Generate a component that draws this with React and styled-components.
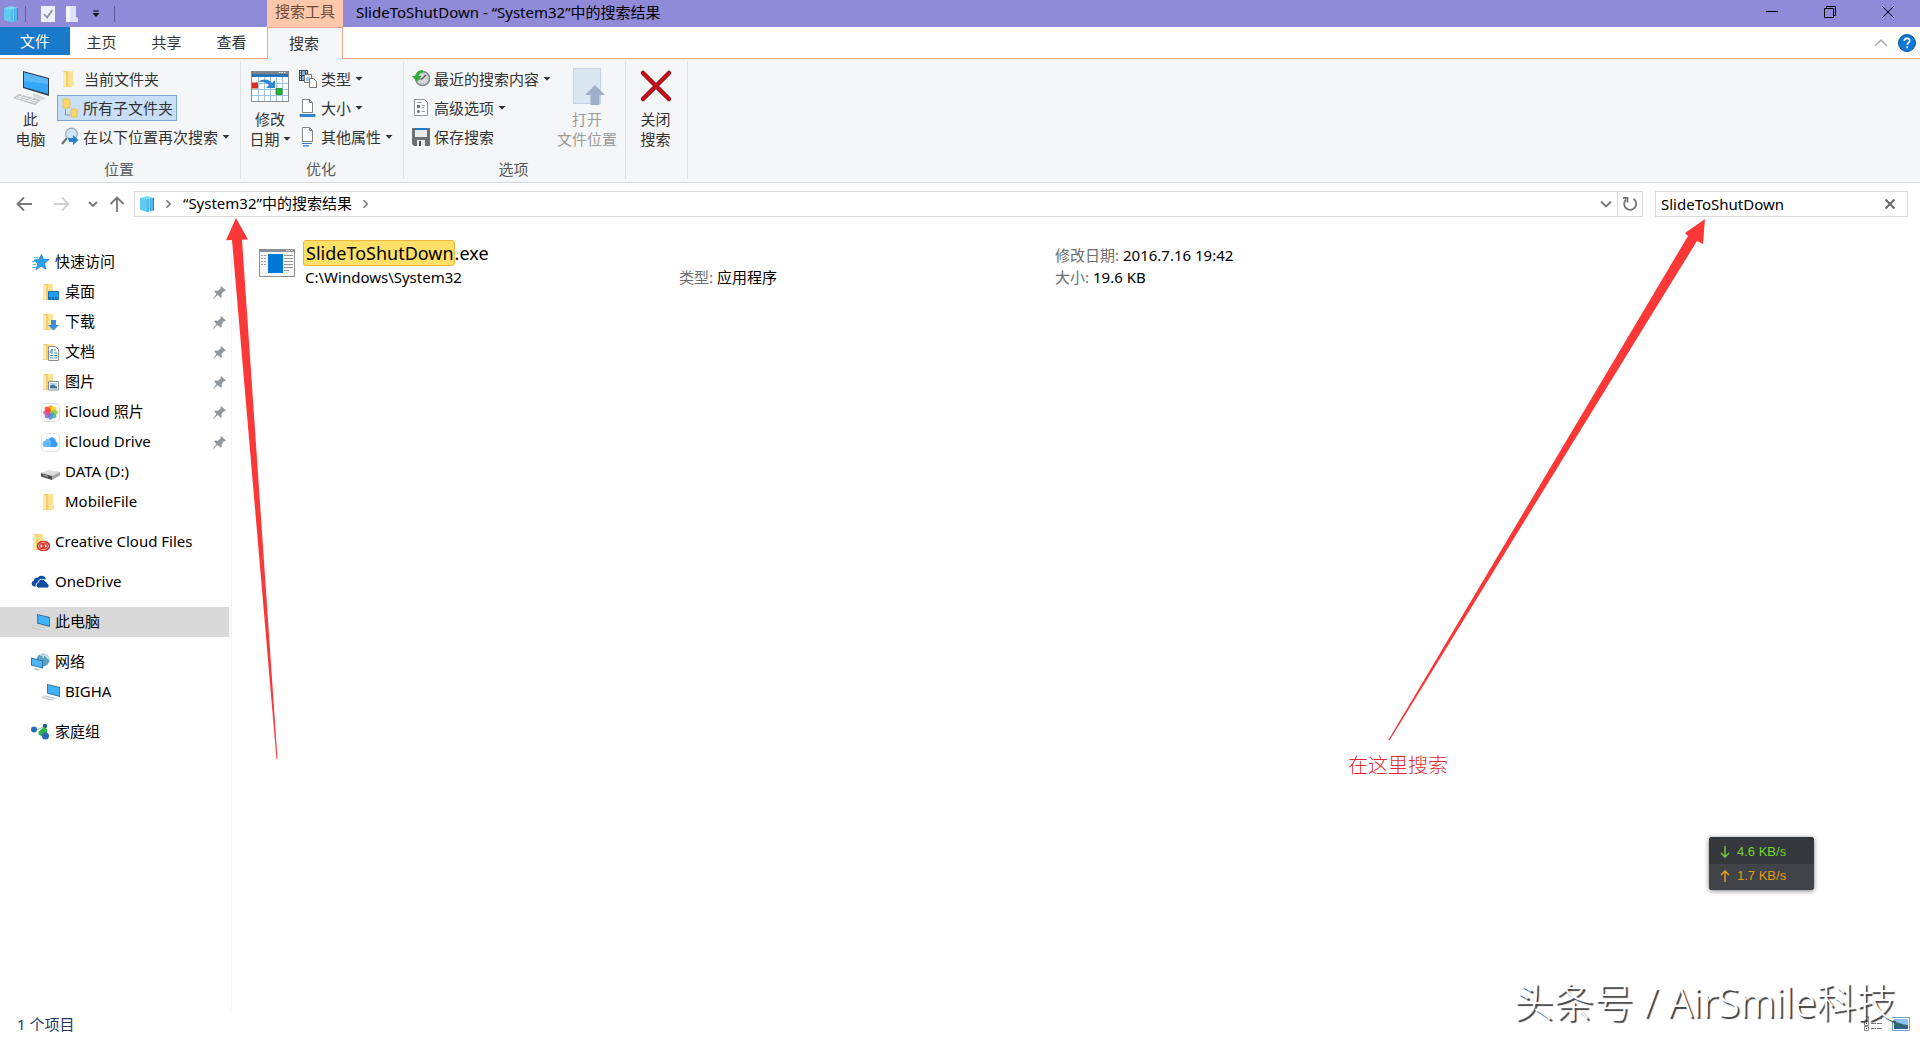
import React, { useState } from "react";
import styled, { createGlobalStyle, css } from "styled-components";

const GlobalStyle = createGlobalStyle`
  * {
    box-sizing: border-box;
  }

  body {
    margin: 0;
    background: #fff;
    font-family: "Noto Sans", "Noto Sans CJK SC", sans-serif;
    font-size: 15px;
    line-height: 20px;
    color: #000;
  }

  button,
  input {
    font: inherit;
    color: inherit;
    margin: 0;
    padding: 0;
    border: 0;
    background: none;
  }

  svg {
    display: block;
    flex: none;
  }
`;

const Window = styled.div`
  position: relative;
  min-height: 100vh;
  display: flex;
  flex-direction: column;
  overflow: hidden;
`;

/* ---------- title bar ---------- */

const TitleBar = styled.header`
  display: flex;
  align-items: stretch;
  height: 27px;
  padding-right: 3px;
  background: #8f8bd8;
`;

const QuickTools = styled.div`
  display: flex;
  align-items: center;
  width: 267px;
  padding-left: 3px;
`;

const ToolSeparator = styled.span`
  width: 1px;
  height: 16px;
  margin: 0 10px 0 6px;
  background: #5f5b96;
`;

const ToolButton = styled.button`
  display: flex;
  align-items: center;
  justify-content: center;
  width: 24px;
  height: 20px;
`;

const ContextTitle = styled.div`
  width: 76px;
  background: #ffc8ab;
  color: #6b4a3c;
  text-align: center;
  line-height: 22px;
`;

const WindowTitle = styled.h1`
  flex: 1;
  margin: 0;
  padding-left: 13px;
  font-size: 15px;
  font-weight: 400;
  line-height: 24px;
`;

const CaptionButton = styled.button`
  display: flex;
  align-items: center;
  justify-content: center;
  width: 58px;
  height: 24px;
`;

/* ---------- tabs ---------- */

const TabRow = styled.nav`
  display: flex;
  height: 32px;
  border-bottom: 1px solid #f0a48a;
`;

const Tab = styled.button`
  width: 65px;
  height: 31px;
  padding: 0 2px 1px 0;
  color: #333;

  ${(props) =>
    props.$kind === "file" &&
    css`
      width: 70px;
      height: 28px;
      padding: 0;
      background: #1979ca;
      color: #fff;
    `}

  ${(props) =>
    props.$kind === "active" &&
    css`
      width: 76px;
      height: 32px;
      margin-left: 2px;
      border: 1px solid #f0a48a;
      border-bottom: 0;
      background: #f5f6f7;
    `}
`;

const TabTools = styled.div`
  display: flex;
  align-items: center;
  gap: 11px;
  margin-left: auto;
  padding-right: 4px;
`;

/* ---------- ribbon ---------- */

const Ribbon = styled.div`
  display: flex;
  height: 124px;
  padding: 2px 0 3px;
  border-bottom: 1px solid #d6d7d8;
  background: #f5f6f7;
`;

const Group = styled.section`
  display: flex;
  flex-direction: column;
  justify-content: space-between;
  padding: 5px 6px 0 4px;
  border-right: 1px solid #dfe1e3;
`;

const GroupBody = styled.div`
  display: flex;
  height: 84px;
`;

const GroupLabel = styled.div`
  height: 20px;
  text-align: center;
  color: #5a5a5a;
`;

const SmallList = styled.div`
  display: flex;
  flex-direction: column;
  align-items: flex-start;
  gap: 3px;
`;

const SmallButton = styled.button`
  display: flex;
  align-items: center;
  gap: 4px;
  height: 26px;
  padding: 0 3px;
  border: 1px solid ${(props) => (props.$selected ? "#7da7d3" : "transparent")};
  background: ${(props) => (props.$selected ? "#c9dff5" : "transparent")};
  color: #333;
  white-space: nowrap;
`;

const LargeButton = styled.button`
  display: flex;
  flex-direction: column;
  align-items: center;
  width: ${(props) => props.$width}px;
  color: ${(props) => (props.disabled ? "#9a9a9a" : "#333")};
  white-space: nowrap;

  > svg {
    margin: 1px 0 2px;
  }
`;

const LargeLine = styled.span`
  display: flex;
  align-items: center;
  gap: 3px;
`;

/* ---------- address row ---------- */

const AddressRow = styled.div`
  display: flex;
  align-items: center;
  height: 41px;
  padding: 1px 12px 0 9px;
`;

const NavButton = styled.button`
  display: flex;
  align-items: center;
  justify-content: center;
  width: ${(props) => props.$width}px;
  height: 26px;
`;

const AddressBox = styled.div`
  flex: 1;
  display: flex;
  align-items: center;
  height: 26px;
  margin-right: 12px;
  padding-left: 4px;
  border: 1px solid #d9d9d9;
`;

const Crumbs = styled.div`
  flex: 1;
  display: flex;
  align-items: center;
  gap: 9px;

  > span {
    padding-bottom: 2px;
  }
`;

const Refresh = styled.button`
  display: flex;
  align-items: center;
  justify-content: center;
  width: 25px;
  height: 24px;
  border-left: 1px solid #d9d9d9;
`;

const SearchBox = styled.form`
  display: flex;
  align-items: center;
  width: 253px;
  height: 26px;
  border: 1px solid #d9d9d9;
`;

const SearchInput = styled.input`
  flex: 1;
  min-width: 0;
  padding-left: 5px;
  outline: 0;
`;

/* ---------- body ---------- */

const Body = styled.div`
  flex: 1;
  display: flex;
`;

const Sidebar = styled.nav`
  width: 232px;
  padding-top: 23px;
  border-right: 1px solid #f3f3f3;
`;

const NavGroup = styled.div`
  margin-bottom: 10px;
`;

const NavItem = styled.a`
  display: flex;
  align-items: center;
  gap: 5px;
  width: 229px;
  height: 30px;
  padding: 0 3px 0 ${(props) => (props.$child ? 41 : 31)}px;
  background: ${(props) => (props.$selected ? "#d9d9d9" : "transparent")};
  color: inherit;
  text-decoration: none;

  > span {
    flex: 1;
    padding-bottom: 2px;
  }
`;

const FileArea = styled.main`
  flex: 1;
  padding: 16px 0 0 27px;
`;

const FileItem = styled.article`
  display: grid;
  grid-template-columns: 420px 376px 1fr;
`;

const FileMain = styled.div`
  display: flex;
  gap: 8px;

  > svg {
    margin-top: 9px;
  }
`;

const FileName = styled.h2`
  margin: 0;
  height: 26px;
  font-size: 18px;
  font-weight: 400;
  line-height: 24px;
`;

const Match = styled.mark`
  display: inline-block;
  height: 26px;
  padding: 0 0 0 2px;
  border: 1px solid #efb63e;
  border-radius: 3px;
  background: #ffe066;
`;

const FilePath = styled.div`
  padding-left: 2px;
  line-height: 22px;
`;

const FileDetails = styled.dl`
  display: flex;
  flex-direction: column;
  justify-content: flex-end;
  margin: 0;

  > div {
    display: flex;
    gap: 4px;
    line-height: 22px;
  }

  dt {
    color: #6d6d6d;
  }

  dd {
    margin: 0;
  }
`;

const StatusBar = styled.footer`
  display: flex;
  align-items: center;
  justify-content: space-between;
  height: 30px;
  padding: 0 10px 2px 17px;
  color: #1e395b;
`;

const ViewButtons = styled.div`
  display: flex;
  gap: 10px;
`;

/* ---------- things lying over the window ---------- */

const PathArrow = styled.svg`
  position: absolute;
  left: 220px;
  top: 216px;
`;

const SearchArrow = styled.svg`
  position: absolute;
  right: 210px;
  top: 216px;
`;

const Note = styled.div`
  position: absolute;
  right: 472px;
  top: 754px;
  color: #e02a2e;
  font-size: 20px;
  font-weight: 300;
  line-height: 24px;
`;

const SpeedMeter = styled.div`
  position: absolute;
  right: 106px;
  bottom: 150px;
  width: 105px;
  border-radius: 3px;
  overflow: hidden;
  box-shadow: 0 1px 5px rgba(0, 0, 0, 0.5);
  background: #404347;
  font-family: "Liberation Sans", Arial, sans-serif;
  font-size: 13px;
`;

const SpeedLine = styled.div`
  display: flex;
  align-items: center;
  gap: 7px;
  height: ${(props) => (props.$up ? 26 : 27)}px;
  padding: ${(props) => (props.$up ? "0 0 2px" : "2px 0 0")};
  padding-left: 11px;
  background: ${(props) => (props.$up ? "#404347" : "#34373c")};
  color: ${(props) => (props.$up ? "#e39a1c" : "#74d52c")};
`;

const Watermark = styled.div`
  position: absolute;
  right: 24px;
  bottom: 13px;
  color: #fff;
  font-size: 40px;
  font-weight: 300;
  line-height: 50px;
  text-shadow: 2px 2px 1px #3c3c3c;
  white-space: nowrap;
  pointer-events: none;
`;

/* ---------- icons ---------- */

const Caret = () => (
  <svg width="8" height="6" viewBox="0 0 8 6">
    <path d="M.5 1h7L4 4.800z" fill="#333" />
  </svg>
);

const Cube = () => (
  <svg width="16" height="18" viewBox="0 0 16 18">
    <path d="M1 3l7-2 7 2v12.500L8 17l-7-2.500z" fill="#7fdcfb" />
    <path d="M1 3l7 1.500V17l-7-2.500z" fill="#5fcaf2" />
    <path d="M8 4h2v12.600L8 17z" fill="#4fb9ee" />
    <path d="M11 3.500h1.500v12.500l-1.500.3z" fill="#3aa3e4" />
    <path d="M13.500 3H15v12.500l-1.500.3z" fill="#2a8bd4" />
  </svg>
);

const ComputerLarge = () => (
  <svg width="38" height="40" viewBox="0 0 38 40">
    <path d="M11 4l26 7v18l-26-8z" fill="#2f3e4a" />
    <path d="M12 5.500l24 6.500v15L12 20z" fill="#35a6f8" />
    <path d="M12 5.500l24 6.500v5L12 14z" fill="#5ab9fb" />
    <path d="M21 26l6 2 7 3-3 2-10-3z" fill="#d5dade" />
    <path d="M7 27l22 6-6 5L1 31z" fill="#b9bec2" />
    <path d="M6 29l20 5.500M4 30.500l20 5.500M11 28l-5 4M16 29.500l-5 4M21 31l-5 4" stroke="#f3f4f5" fill="none" />
  </svg>
);

const Computer = () => (
  <svg width="19" height="18" viewBox="0 0 19 18">
    <path d="M6 1l13 3v10L6 10.500z" fill="#3d6d92" />
    <path d="M6.800 2l11.400 2.700v8L6.800 9.800z" fill="#3fb2fa" />
    <path d="M4 12.500l11 2.500-4 2.500L0 15z" fill="#c6cacd" />
    <path d="M3 13.800l10 2.500" stroke="#eee" />
  </svg>
);

const Folder = ({ children }) => (
  <svg width="19" height="18" viewBox="0 0 19 18">
    <path d="M2 1h9v16H2z" fill="#f3cf6e" />
    <path d="M7 1h5v10l1 1v4.500H7z" fill="#ffe291" />
    <path d="M2 1l3 2v14l-3-1z" fill="#ffe9ae" />
    {children}
  </svg>
);

const DesktopFolder = () => (
  <Folder>
    <path d="M7.500 8.500h10v8h-10z" fill="#1ea0f2" stroke="#1b6daa" />
    <path d="M8 15h9" stroke="#0d4f85" strokeDasharray="2 1" />
  </Folder>
);

const DownloadFolder = () => (
  <Folder>
    <path d="M10 7h5v5h3l-5.500 5.500L7 12h3z" fill="#3b8ede" />
  </Folder>
);

const DocFolder = () => (
  <Folder>
    <path d="M7.500 3.500h7l3 3v11h-10z" fill="#fff" stroke="#8a8f94" />
    <path d="M9 10l2-4v5M13 7h2M9 12.500h3M13 10h3M9 15h3M13 12.500h3M13 15h3" stroke="#3f8bc4" fill="none" />
  </Folder>
);

const PictureFolder = () => (
  <Folder>
    <path d="M7.500 8.500h10v8.500h-10z" fill="#fff" stroke="#8a8f94" />
    <path d="M9 10h7v2H9z" fill="#a9d3f5" />
    <path d="M9 12.500l3-1 4 2v2H9z" fill="#44739b" />
  </Folder>
);

const CloudFolder = () => (
  <Folder>
    <ellipse cx="12.500" cy="13" rx="6" ry="4.500" fill="#fff" stroke="#d8251c" strokeWidth="1.500" />
    <circle cx="11" cy="13" r="2.300" fill="none" stroke="#d8251c" strokeWidth="1.200" />
    <circle cx="14" cy="13" r="2.300" fill="none" stroke="#d8251c" strokeWidth="1.200" />
  </Folder>
);

const QuickStar = () => (
  <svg width="19" height="18" viewBox="0 0 19 18">
    <path d="M10.500 1.500l1.800 4.700 5.700.300-4.500 3.700 1.300 6L10 13l-5 4 1.800-6.200L3 7l5-.5z" fill="#2aa0ee" stroke="#1f7dc4" strokeWidth=".8" />
    <path d="M3 4.500h4M1 8.500h4M2 11.500h3M1 14.500h4" stroke="#4db4f3" strokeWidth="1" />
  </svg>
);

const PETALS = ["#f8a11c", "#f4d81f", "#9ccb3b", "#4dbb8d", "#4d95d8", "#8b6cc1", "#d7519b", "#ee4b34"];

const Photos = () => (
  <svg width="19" height="19" viewBox="0 0 19 19">
    <rect x=".5" y=".5" width="18" height="18" rx="4" fill="#fff" stroke="#dcdcdf" />
    {PETALS.map((color, i) => (
      <ellipse key={color} cx="9.500" cy="5.700" rx="2.500" ry="3.500" fill={color} opacity=".9" transform={`rotate(${i * 45} 9.500 9.500)`} />
    ))}
  </svg>
);

const CloudDrive = () => (
  <svg width="19" height="19" viewBox="0 0 19 19">
    <rect x=".5" y=".5" width="18" height="18" rx="4" fill="#fff" stroke="#e4e4e7" />
    <path d="M5 14a3 3 0 0 1-.5-6 2.500 2.500 0 0 1 3-2 4.200 4.200 0 0 1 7.500 2.500A2.900 2.900 0 0 1 14.500 14z" fill="#3c9df5" />
    <path d="M5 14a3 3 0 0 1-.5-6 2.500 2.500 0 0 1 3-2C10 7 11 11 9 14z" fill="#66bcfa" />
  </svg>
);

const Drive = () => (
  <svg width="19" height="18" viewBox="0 0 19 18">
    <path d="M0 10l7-3 12 2-8 4z" fill="#dcdddd" />
    <path d="M0 10l11 3v4L0 13.500z" fill="#4b4d50" />
    <path d="M11 13l8-4v3.500l-8 4.500z" fill="#a3a5a7" />
    <path d="M2 12l5 1.500" stroke="#b6b8ba" />
  </svg>
);

const OneDrive = () => (
  <svg width="19" height="18" viewBox="0 0 19 18">
    <path d="M3 13.500a3 3 0 0 1-.3-5.800 3.500 3.500 0 0 1 3.800-3 4.800 4.800 0 0 1 8.500 1.500L9 7l-4 6.500z" fill="#0c4da2" />
    <path d="M7.500 15a2.800 2.800 0 0 1-.3-5.500 3.700 3.700 0 0 1 7-1.300 3 3 0 0 1 2.500 2.500A2.300 2.300 0 0 1 16.500 15z" fill="#0c4da2" stroke="#fff" strokeWidth=".9" />
  </svg>
);

const Network = () => (
  <svg width="19" height="18" viewBox="0 0 19 18">
    <circle cx="12" cy="7" r="6.500" fill="#5f9fc0" />
    <path d="M9 2c3-1 4 1 3 3M13 1.500c2 1 4 2 4.500 5" stroke="#cfeaf4" strokeWidth="1.500" fill="none" />
    <path d="M0 4.500l12 3v8L0 12.500z" fill="#2f75aa" />
    <path d="M1 5.800l10 2.500v6L1 11.800z" fill="#4fb6f8" />
    <path d="M4 15l5 1.200-2 1.300-4-1z" fill="#b8c2c9" />
  </svg>
);

const HomeGroup = () => (
  <svg width="19" height="18" viewBox="0 0 19 18">
    <path d="M6 7l8-4M12 9l3 5" stroke="#8bc7a8" />
    <circle cx="3" cy="6.500" r="3" fill="#2e6db8" />
    <circle cx="14" cy="3" r="2.200" fill="#2257a5" />
    <path d="M7.500 8.500L13 4l3 2v6l-4 2-4.500-2.500z" fill="#2fb34a" />
    <circle cx="14.500" cy="13" r="3.500" fill="#2a69b4" />
  </svg>
);

const Pin = () => (
  <svg width="13" height="13" viewBox="0 0 13 13">
    <path d="M8 0l5 4.500-1.500.8-1 .2-2 2.700.3 2.600-1 1L4.800 9 .5 12.800 0 12.500 3.500 8 1.200 5.500l1-.9 2.800.2 2.600-2.200V1z" fill="#8d979f" />
  </svg>
);

const FolderTree = () => (
  <svg width="18" height="20" viewBox="0 0 18 20">
    <path d="M2 1h6l1 1v8H2zM10 11h5l1 1v7h-6z" fill="#fbd66e" stroke="#e9b94c" strokeWidth=".8" />
    <path d="M4.500 11v6H9" stroke="#8a9096" fill="none" />
  </svg>
);

const SearchAgain = () => (
  <svg width="18" height="20" viewBox="0 0 18 20">
    <path d="M6 11l-5 6" stroke="#6b7278" strokeWidth="2.200" />
    <circle cx="10.500" cy="7" r="5.800" fill="#cfe6f7" stroke="#8eaabf" strokeWidth="1.200" />
    <path d="M7 11h5V8l5.500 5-5.500 5v-3H8z" fill="#2a7fd0" />
  </svg>
);

const Calendar = () => (
  <svg width="38" height="40" viewBox="0 0 38 40">
    <path d="M.5 4.500h37v30H.5z" fill="#fff" stroke="#8a8d90" />
    <path d="M0 4h38v3H0z" fill="#808488" />
    <path d="M1 7h36v3H1z" fill="#2873b8" />
    <path d="M28 5.500h7" stroke="#fff" strokeDasharray="1.500 1" />
    <path d="M1 16.500h36M1 22.500h36M1 28.500h36M7.500 10v24M13.500 10v24M19.500 10v24M25.500 10v24M31.500 10v24" stroke="#9cc4e2" />
    <path d="M1 15.500h6v6H1z" fill="#d92b23" />
    <path d="M25 21.500h6v6h-6z" fill="#23b535" stroke="#18832a" strokeWidth=".8" />
    <path d="M7 15c5-4 11-3 14 1l3-3v8h-9l3-3c-3-3-7-4-11-3z" fill="#2e86d2" />
  </svg>
);

const KindIcon = () => (
  <svg width="18" height="20" viewBox="0 0 18 20">
    <path d="M0 1h9v11H0z" fill="#3b444d" />
    <path d="M1.500 2v10M7.500 2v4" stroke="#fff" strokeDasharray="1.500 1" />
    <path d="M3 2h3v4H3zM3 7h3v4H3z" fill="#78aee0" />
    <path d="M5.500 5.500h7v8h-7z" fill="#fff" stroke="#777" />
    <path d="M7 8h4v4H7z" fill="#a9c9e8" />
    <path d="M10.500 9.500h4l3 3v6h-7z" fill="#fff" stroke="#777" />
  </svg>
);

const SizeIcon = () => (
  <svg width="18" height="20" viewBox="0 0 18 20">
    <path d="M3.500 1.500h7l3 3v10h-10z" fill="#fff" stroke="#808488" />
    <path d="M10.500 1.500v3h3" fill="none" stroke="#808488" />
    <path d="M1 16.500h15v2H1z" fill="#2f8be0" stroke="#1763ae" strokeWidth=".7" />
  </svg>
);

const PropertyIcon = () => (
  <svg width="18" height="20" viewBox="0 0 18 20">
    <path d="M3.500.500h7l3 3v11h-10z" fill="#fff" stroke="#808488" />
    <path d="M10.500.500v3h3" fill="none" stroke="#808488" />
    <path d="M3 16.500h10M4 18.800h6" stroke="#2a7fd0" strokeWidth="1.200" />
  </svg>
);

const RecentIcon = () => (
  <svg width="18" height="20" viewBox="0 0 18 20">
    <circle cx="10.500" cy="9.500" r="7" fill="#d5d8da" stroke="#84888c" strokeWidth="1.500" />
    <circle cx="10.500" cy="9.500" r="5" fill="none" stroke="#a9adb0" strokeDasharray="1 2" />
    <path d="M10 10l4-4M10 10H7" stroke="#555" strokeWidth="1.200" />
    <path d="M11 1C6 1 3.500 4 3.500 7H0l5 6 4.500-6H6.500C7 5 9 3.500 11 3.500z" fill="#2fae3e" />
  </svg>
);

const AdvancedIcon = () => (
  <svg width="18" height="20" viewBox="0 0 18 20">
    <path d="M2.500 1.500h10l3 3v13h-13z" fill="#fff" stroke="#909498" />
    <path d="M5 7h3v3H5z" fill="#6f7478" />
    <circle cx="6.500" cy="13.500" r="1.500" fill="#6f7478" />
    <path d="M9.500 7.500H13M9.500 9.500H12M9.500 13.500H13M5 4.500h5" stroke="#9aa0a5" />
  </svg>
);

const SaveIcon = () => (
  <svg width="18" height="20" viewBox="0 0 18 20">
    <path d="M0 1h18v18H2l-2-2z" fill="#6d6f72" />
    <path d="M3 1h12v9H3z" fill="#e9eaeb" />
    <path d="M3 1h12v2H3z" fill="#1f78c8" />
    <path d="M5 13h8v6H5z" fill="#e8e8e8" />
    <path d="M7 14h2v5H7z" fill="#4d4f52" />
  </svg>
);

const OpenLocation = () => (
  <svg width="38" height="40" viewBox="0 0 38 40">
    <path d="M5.500 1.500h27v35h-27z" fill="#dbe6f3" stroke="#c4d3e5" />
    <path d="M27 18l10 10h-5.500v10h-9V28H17z" fill="#9dafc9" />
  </svg>
);

const CloseSearch = () => (
  <svg width="38" height="40" viewBox="0 0 38 40">
    <path d="M6 6l26 26M32 6L6 32" stroke="#8e0712" strokeWidth="4.500" strokeLinecap="round" />
    <path d="M6 6l26 26M32 6L6 32" stroke="#c9101c" strokeWidth="2.500" strokeLinecap="round" />
  </svg>
);

const Chevron = ({ d, color = "#777", size = 12, width = 1.8 }) => (
  <svg width={size} height={size} viewBox="0 0 12 12">
    <path d={d} fill="none" stroke={color} strokeWidth={width} />
  </svg>
);

const Arrow = ({ d, color = "#777" }) => (
  <svg width="16" height="16" viewBox="0 0 16 16">
    <path d={d} fill="none" stroke={color} strokeWidth="1.800" />
  </svg>
);

const ExeIcon = () => (
  <svg width="36" height="28" viewBox="0 0 36 28">
    <path d="M.5.500h35v27H.5z" fill="#f6f6f6" stroke="#8c9094" />
    <path d="M0 0h36v3H0z" fill="#8c9094" />
    <path d="M27 1.500h7" stroke="#fff" strokeDasharray="1.500 1" />
    <path d="M9 5h15v19H9z" fill="#0078d7" />
    <path d="M2 6.500h5M2 9.500h5M2 12.500h5M2 15.500h5" stroke="#999" strokeDasharray="2 1" />
    <path d="M25 6.500h9M25 9.500h9M25 12.500h9M25 15.500h9M25 18.500h9M25 21.500h5" stroke="#999" />
  </svg>
);

const places = [
  [
    { name: "快速访问", Icon: QuickStar },
    { name: "桌面", Icon: DesktopFolder, child: true, pinned: true },
    { name: "下载", Icon: DownloadFolder, child: true, pinned: true },
    { name: "文档", Icon: DocFolder, child: true, pinned: true },
    { name: "图片", Icon: PictureFolder, child: true, pinned: true },
    { name: "iCloud 照片", Icon: Photos, child: true, pinned: true },
    { name: "iCloud Drive", Icon: CloudDrive, child: true, pinned: true },
    { name: "DATA (D:)", Icon: Drive, child: true },
    { name: "MobileFile", Icon: Folder, child: true },
  ],
  [{ name: "Creative Cloud Files", Icon: CloudFolder }],
  [{ name: "OneDrive", Icon: OneDrive }],
  [{ name: "此电脑", Icon: Computer, selected: true }],
  [
    { name: "网络", Icon: Network },
    { name: "BIGHA", Icon: Computer, child: true },
  ],
  [{ name: "家庭组", Icon: HomeGroup }],
];

const RibbonItem = ({ Icon, text, menu, selected }) => (
  <SmallButton type="button" $selected={selected}>
    <Icon />
    {text}
    {menu && <Caret />}
  </SmallButton>
);

const App = () => {
  const [query, setQuery] = useState("SlideToShutDown");

  return (
    <Window>
      <GlobalStyle />
      <TitleBar>
        <QuickTools>
          <Cube />
          <ToolSeparator />
          <ToolButton type="button" aria-label="属性">
            <svg width="16" height="18" viewBox="0 0 16 18">
              <path d="M1 1h14v16H1z" fill="#eef1f8" />
              <path d="M4 9l3 3.500L12.500 5" fill="none" stroke="#8b90a8" strokeWidth="1.800" />
            </svg>
          </ToolButton>
          <ToolButton type="button" aria-label="新建文件夹">
            <svg width="16" height="18" viewBox="0 0 16 18">
              <path d="M2 1h10v11l2 1v4H2z" fill="#dfe2f0" />
              <path d="M2 1l4 2v14l-4-1z" fill="#f4f5fb" />
            </svg>
          </ToolButton>
          <ToolButton type="button" aria-label="自定义">
            <svg width="8" height="8" viewBox="0 0 8 8">
              <path d="M1 1h6" stroke="#111" />
              <path d="M.5 3h7L4 7z" fill="#111" />
            </svg>
          </ToolButton>
          <ToolSeparator />
        </QuickTools>
        <ContextTitle>搜索工具</ContextTitle>
        <WindowTitle>SlideToShutDown - “System32”中的搜索结果</WindowTitle>
        <CaptionButton type="button" aria-label="最小化">
          <svg width="12" height="12" viewBox="0 0 12 12">
            <path d="M0 5.500h12" stroke="#000" />
          </svg>
        </CaptionButton>
        <CaptionButton type="button" aria-label="还原">
          <svg width="12" height="12" viewBox="0 0 12 12">
            <path d="M.5 2.500h9v9h-9zM2.500 2.500v-2h9v9h-2" fill="none" stroke="#000" />
          </svg>
        </CaptionButton>
        <CaptionButton type="button" aria-label="关闭">
          <svg width="12" height="12" viewBox="0 0 12 12">
            <path d="M0 0l12 12M12 0L0 12" stroke="#000" />
          </svg>
        </CaptionButton>
      </TitleBar>

      <TabRow>
        <Tab type="button" $kind="file">文件</Tab>
        <Tab type="button">主页</Tab>
        <Tab type="button">共享</Tab>
        <Tab type="button">查看</Tab>
        <Tab type="button" $kind="active">搜索</Tab>
        <TabTools>
          <button type="button" aria-label="折叠功能区">
            <Chevron d="M0 9l6-6 6 6" color="#a5a5a5" width={1.3} />
          </button>
          <button type="button" aria-label="帮助">
            <svg width="18" height="18" viewBox="0 0 18 18">
              <circle cx="9" cy="9" r="8.500" fill="#0f78d4" stroke="#0a5498" />
              <path d="M6.300 7c0-3.500 5.400-3.500 5.400-.4 0 2-2.500 2-2.500 4.200M9.200 12.300v2" fill="none" stroke="#fff" strokeWidth="1.700" />
            </svg>
          </button>
        </TabTools>
      </TabRow>

      <Ribbon>
        <Group>
          <GroupBody>
            <LargeButton type="button" $width={53}>
              <ComputerLarge />
              <LargeLine>此</LargeLine>
              <LargeLine>电脑</LargeLine>
            </LargeButton>
            <SmallList>
              <RibbonItem Icon={Folder} text="当前文件夹" />
              <RibbonItem Icon={FolderTree} text="所有子文件夹" selected />
              <RibbonItem Icon={SearchAgain} text="在以下位置再次搜索" menu />
            </SmallList>
          </GroupBody>
          <GroupLabel>位置</GroupLabel>
        </Group>
        <Group>
          <GroupBody>
            <LargeButton type="button" $width={50}>
              <Calendar />
              <LargeLine>修改</LargeLine>
              <LargeLine>
                日期
                <Caret />
              </LargeLine>
            </LargeButton>
            <SmallList>
              <RibbonItem Icon={KindIcon} text="类型" menu />
              <RibbonItem Icon={SizeIcon} text="大小" menu />
              <RibbonItem Icon={PropertyIcon} text="其他属性" menu />
            </SmallList>
          </GroupBody>
          <GroupLabel>优化</GroupLabel>
        </Group>
        <Group>
          <GroupBody>
            <SmallList>
              <RibbonItem Icon={RecentIcon} text="最近的搜索内容" menu />
              <RibbonItem Icon={AdvancedIcon} text="高级选项" menu />
              <RibbonItem Icon={SaveIcon} text="保存搜索" />
            </SmallList>
            <LargeButton type="button" $width={64} disabled>
              <OpenLocation />
              <LargeLine>打开</LargeLine>
              <LargeLine>文件位置</LargeLine>
            </LargeButton>
          </GroupBody>
          <GroupLabel>选项</GroupLabel>
        </Group>
        <Group>
          <GroupBody>
            <LargeButton type="button" $width={51}>
              <CloseSearch />
              <LargeLine>关闭</LargeLine>
              <LargeLine>搜索</LargeLine>
            </LargeButton>
          </GroupBody>
        </Group>
      </Ribbon>

      <AddressRow>
        <NavButton type="button" $width={30} aria-label="后退">
          <Arrow d="M16 8H1.500M8 1.500L1.500 8 8 14.500" />
        </NavButton>
        <NavButton type="button" $width={46} aria-label="前进">
          <Arrow d="M0 8h14.500M8 1.500L14.500 8 8 14.500" color="#d0d0d0" />
        </NavButton>
        <NavButton type="button" $width={15} aria-label="最近浏览的位置">
          <Chevron d="M2 4l4 4 4-4" />
        </NavButton>
        <NavButton type="button" $width={34} aria-label="上移">
          <Arrow d="M8 16V1.500M1.500 8L8 1.500 14.500 8" />
        </NavButton>
        <AddressBox>
          <Crumbs>
            <Cube />
            <Chevron d="M3 1.500L7.500 6 3 10.500" size={10} />
            <span>“System32”中的搜索结果</span>
            <Chevron d="M3 1.500L7.500 6 3 10.500" size={10} />
          </Crumbs>
          <NavButton type="button" $width={23} aria-label="以前的位置">
            <Chevron d="M1 3.500L6 8.500 11 3.500" />
          </NavButton>
          <Refresh type="button" aria-label="刷新">
            <svg width="16" height="16" viewBox="0 0 16 16">
              <path d="M11.500 2.800A6 6 0 1 1 4 3.500" fill="none" stroke="#777" strokeWidth="1.800" />
              <path d="M1 2h4.500v4.500" fill="none" stroke="#777" strokeWidth="1.800" />
            </svg>
          </Refresh>
        </AddressBox>
        <SearchBox onSubmit={(e) => e.preventDefault()}>
          <SearchInput aria-label="搜索" value={query} onChange={(e) => setQuery(e.target.value)} />
          <NavButton type="button" $width={34} aria-label="清除" onClick={() => setQuery("")}>
            <Chevron d="M1.500 1.500l9 9M10.500 1.500l-9 9" color="#666" width={2} />
          </NavButton>
        </SearchBox>
      </AddressRow>

      <Body>
        <Sidebar>
          {places.map((group) => (
            <NavGroup key={group[0].name}>
              {group.map(({ name, Icon, child, pinned, selected }) => (
                <NavItem key={name} href="#" $child={child} $selected={selected}>
                  <Icon />
                  <span>{name}</span>
                  {pinned && <Pin />}
                </NavItem>
              ))}
            </NavGroup>
          ))}
        </Sidebar>
        <FileArea>
          <FileItem>
            <FileMain>
              <ExeIcon />
              <div>
                <FileName>
                  <Match>SlideToShutDown</Match>.exe
                </FileName>
                <FilePath>C:\Windows\System32</FilePath>
              </div>
            </FileMain>
            <FileDetails>
              <div>
                <dt>类型:</dt>
                <dd>应用程序</dd>
              </div>
            </FileDetails>
            <FileDetails>
              <div>
                <dt>修改日期:</dt>
                <dd>2016.7.16 19:42</dd>
              </div>
              <div>
                <dt>大小:</dt>
                <dd>19.6 KB</dd>
              </div>
            </FileDetails>
          </FileItem>
        </FileArea>
      </Body>

      <StatusBar>
        <span>1 个项目</span>
        <ViewButtons>
          <button type="button" aria-label="详细信息">
            <svg width="18" height="16" viewBox="0 0 18 16">
              <path d="M.5.500h4v4h-4zM.5 5.500h4v4h-4zM.5 10.500h4v4h-4z" fill="#fff" stroke="#888" />
              <path d="M2 2.500h1M2 7.500h1M2 12.500h1" stroke="#222" />
              <path d="M7 2.500h11M7 7.500h11M7 12.500h11" stroke="#777" strokeDasharray="5 1" />
            </svg>
          </button>
          <button type="button" aria-label="大缩略图">
            <svg width="18" height="14" viewBox="0 0 18 14">
              <path d="M.5.500h17v13H.5z" fill="#fff" stroke="#6b9fd0" />
              <path d="M2 2h14v10H2z" fill="#8fc3f5" />
              <path d="M2 5c5 0 8 3 14 3v4H2z" fill="#2f6b6c" />
              <path d="M2 10h14v2H2z" fill="#2d5f9b" />
            </svg>
          </button>
        </ViewButtons>
      </StatusBar>

      <PathArrow width="64" height="546" viewBox="0 0 64 546">
        <path d="M16 2l12 21.500-6 .3L57.500 543h-1L12 24l-6 .3z" fill="#fb3838" />
      </PathArrow>
      <SearchArrow width="326" height="528" viewBox="0 0 326 528">
        <path d="M321 3l-2 25-6-3L5.500 524.500l-1-.7L304 20l-3-3z" fill="#fb3838" />
      </SearchArrow>
      <Note>在这里搜索</Note>
      <SpeedMeter>
        <SpeedLine>
          <svg width="10" height="12" viewBox="0 0 10 12">
            <path d="M5 0v11M1 7l4 4 4-4" fill="none" stroke="#74c53c" strokeWidth="1.500" />
          </svg>
          4.6 KB/s
        </SpeedLine>
        <SpeedLine $up>
          <svg width="10" height="12" viewBox="0 0 10 12">
            <path d="M5 12V1M1 5l4-4 4 4" fill="none" stroke="#e39a1c" strokeWidth="1.500" />
          </svg>
          1.7 KB/s
        </SpeedLine>
      </SpeedMeter>
      <Watermark>头条号 / AirSmile科技</Watermark>
    </Window>
  );
};

export default App;
